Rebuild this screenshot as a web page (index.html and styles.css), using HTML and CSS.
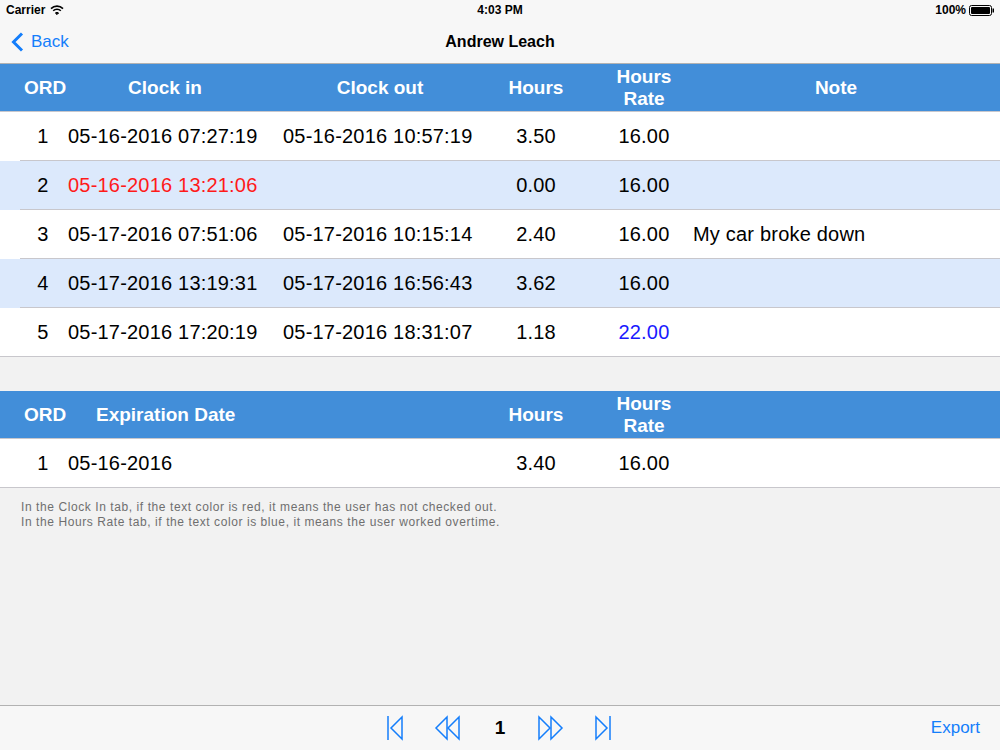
FILE: index.html
```html
<!DOCTYPE html>
<html lang="en">
<head>
  <meta charset="UTF-8" />
  <meta name="viewport" content="width=device-width, initial-scale=1.0" />
  <title>Andrew Leach</title>
  <link rel="stylesheet" href="styles.css">
</head>
<body>
  <div class="status-bar">
    <div class="status-left">
      <span>Carrier</span>
      <svg class="wifi" width="14" height="10" viewBox="0 0 14 10">
        <path d="M1 3.6 A8.5 8.5 0 0 1 13 3.6" fill="none" stroke="#000" stroke-width="1.6"/>
        <path d="M3.2 5.8 A5.4 5.4 0 0 1 10.8 5.8" fill="none" stroke="#000" stroke-width="1.6"/>
        <path d="M5.4 8 A2.4 2.4 0 0 1 8.6 8 L7 9.6 Z" fill="#000" stroke="#000" stroke-width="1"/>
      </svg>
    </div>
    <div class="status-time">4:03 PM</div>
    <div class="status-right">
      <span>100%</span>
      <svg width="26" height="11" viewBox="0 0 26 11">
        <rect x="0.5" y="0.5" width="22" height="10" rx="2" fill="none" stroke="#000"/>
        <rect x="2" y="2" width="19" height="7" rx="1" fill="#000"/>
        <rect x="23.5" y="3.5" width="1.5" height="4" fill="#000"/>
      </svg>
    </div>
  </div>

  <div class="nav-bar">
    <a class="back" href="#">
      <svg width="14" height="20" viewBox="0 0 14 20">
        <path d="M11 1.5 L2.5 10 L11 18.5" fill="none" stroke="#147efb" stroke-width="3"/>
      </svg>
      <span>Back</span>
    </a>
    <div class="nav-title">Andrew Leach</div>
  </div>

  <div class="content">
    <div class="table">
      <div class="head">
        <div class="cols">
          <div class="c">ORD</div>
          <div class="c">Clock in</div>
          <div class="c out-head">Clock out</div>
          <div class="c">Hours</div>
          <div class="c">Hours<br>Rate</div>
          <div class="c note-head">Note</div>
        </div>
      </div>
      <div class="row">
        <div class="cols line">
          <div class="c">1</div>
          <div class="c in">05-16-2016 07:27:19</div>
          <div class="c out">05-16-2016 10:57:19</div>
          <div class="c">3.50</div>
          <div class="c">16.00</div>
          <div class="c note"></div>
        </div>
      </div>
      <div class="row alt">
        <div class="cols line">
          <div class="c">2</div>
          <div class="c in red">05-16-2016 13:21:06</div>
          <div class="c out"></div>
          <div class="c">0.00</div>
          <div class="c">16.00</div>
          <div class="c note"></div>
        </div>
      </div>
      <div class="row">
        <div class="cols line">
          <div class="c">3</div>
          <div class="c in">05-17-2016 07:51:06</div>
          <div class="c out">05-17-2016 10:15:14</div>
          <div class="c">2.40</div>
          <div class="c">16.00</div>
          <div class="c note">My car broke down</div>
        </div>
      </div>
      <div class="row alt">
        <div class="cols line">
          <div class="c">4</div>
          <div class="c in">05-17-2016 13:19:31</div>
          <div class="c out">05-17-2016 16:56:43</div>
          <div class="c">3.62</div>
          <div class="c">16.00</div>
          <div class="c note"></div>
        </div>
      </div>
      <div class="row last">
        <div class="cols">
          <div class="c">5</div>
          <div class="c in">05-17-2016 17:20:19</div>
          <div class="c out">05-17-2016 18:31:07</div>
          <div class="c">1.18</div>
          <div class="c blue">22.00</div>
          <div class="c note"></div>
        </div>
      </div>
    </div>

    <div class="table second">
      <div class="head">
        <div class="cols">
          <div class="c">ORD</div>
          <div class="c in-head">Expiration Date</div>
          <div class="c"></div>
          <div class="c">Hours</div>
          <div class="c">Hours<br>Rate</div>
          <div class="c"></div>
        </div>
      </div>
      <div class="row last">
        <div class="cols">
          <div class="c">1</div>
          <div class="c in">05-16-2016</div>
          <div class="c"></div>
          <div class="c">3.40</div>
          <div class="c">16.00</div>
          <div class="c"></div>
        </div>
      </div>
    </div>

    <div class="hint">
      In the Clock In tab, if the text color is red, it means the user has not checked out.<br>
      In the Hours Rate tab, if the text color is blue, it means the user worked overtime.
    </div>
  </div>

  <div class="toolbar">
    <div class="pager">
      <svg width="18" height="26" viewBox="0 0 18 26">
        <path d="M2 1 V25" stroke="#147efb" stroke-width="1.5"/>
        <path d="M16 2 L5 13 L16 24 Z" fill="none" stroke="#147efb" stroke-width="1.5"/>
      </svg>
      <svg width="28" height="26" viewBox="0 0 28 26">
        <path d="M13 2 L2 13 L13 24 Z" fill="none" stroke="#147efb" stroke-width="1.5"/>
        <path d="M25 2 L14 13 L25 24 Z" fill="none" stroke="#147efb" stroke-width="1.5"/>
      </svg>
      <span class="page">1</span>
      <svg width="28" height="26" viewBox="0 0 28 26">
        <path d="M3 2 L14 13 L3 24 Z" fill="none" stroke="#147efb" stroke-width="1.5"/>
        <path d="M15 2 L26 13 L15 24 Z" fill="none" stroke="#147efb" stroke-width="1.5"/>
      </svg>
      <svg width="18" height="26" viewBox="0 0 18 26">
        <path d="M2 2 L13 13 L2 24 Z" fill="none" stroke="#147efb" stroke-width="1.5"/>
        <path d="M16 1 V25" stroke="#147efb" stroke-width="1.5"/>
      </svg>
    </div>
    <a class="export" href="#">Export</a>
  </div>
</body>
</html>
```

FILE: styles.css
```css
html, body {
  margin: 0;
  height: 100%;
}
body {
  width: 1000px;
  height: 750px;
  display: flex;
  flex-direction: column;
  font-family: "Liberation Sans", Arial, sans-serif;
  background-color: #f2f2f2;
  color: #000;
  overflow: hidden;
}
a {
  text-decoration: none;
}
.status-bar {
  height: 20px;
  display: flex;
  align-items: center;
  justify-content: space-between;
  padding: 0 5px 0 6px;
  background-color: #f7f7f7;
  font-size: 12px;
  font-weight: bold;
  position: relative;
}
.status-left, .status-right {
  display: flex;
  align-items: center;
  gap: 5px;
}
.status-right {
  gap: 3px;
}
.status-time {
  position: absolute;
  left: 0;
  right: 0;
  text-align: center;
  pointer-events: none;
}
.nav-bar {
  box-sizing: border-box;
  height: 44px;
  display: flex;
  align-items: center;
  background-color: #f7f7f7;
  border-bottom: 1px solid #b2b2b2;
  position: relative;
}
.back {
  display: flex;
  align-items: center;
  gap: 6px;
  padding-left: 11px;
  color: #147efb;
  font-size: 17px;
  position: relative;
  z-index: 1;
}
.nav-title {
  position: absolute;
  left: 0;
  right: 0;
  text-align: center;
  font-size: 16px;
  font-weight: bold;
}
.content {
  flex: 1;
}
.second {
  margin-top: 34px;
}
.head {
  background-color: #428ed9;
  color: #fff;
  font-weight: bold;
  font-size: 19px;
  border-bottom: 1px solid #c8c7cc;
}
.head .cols {
  height: 47px;
  margin-left: 20px;
}
.head .c {
  line-height: 22px;
}
.cols {
  display: grid;
  grid-template-columns: 38px 206px 216px 104px 112px 276px;
  align-items: center;
  padding-left: 4px;
}
.c {
  text-align: center;
}
.out-head {
  padding-left: 8px;
}
.note-head {
  padding-right: 4px;
}
.row {
  background-color: #fff;
  font-size: 20px;
  letter-spacing: 0.2px;
}
.row.alt {
  background-color: #dce9fc;
}
.row .cols {
  height: 48px;
  margin-left: 20px;
}
.row .line {
  border-bottom: 1px solid #c8c7cc;
}
.row.last {
  border-bottom: 1px solid #c8c7cc;
}
.in, .out, .note, .in-head {
  text-align: left;
}
.in {
  padding-left: 6px;
}
.in-head {
  padding-left: 34px;
  white-space: nowrap;
}
.out {
  padding-left: 15px;
}
.note {
  margin-left: -7px;
}
.red {
  color: #ff1a1a;
}
.blue {
  color: #1a1aff;
}
.hint {
  padding: 12px 0 0 21px;
  font-size: 12px;
  letter-spacing: 0.58px;
  line-height: 15px;
  color: #6f6f6f;
}
.toolbar {
  height: 44px;
  display: flex;
  align-items: center;
  justify-content: center;
  background-color: #f7f7f7;
  border-top: 1px solid #b2b2b2;
  position: relative;
}
.pager {
  display: flex;
  align-items: center;
  gap: 30px;
  margin-left: -2px;
}
.page {
  font-size: 19px;
  font-weight: bold;
  width: 12px;
  margin-left: 2px;
  text-align: center;
}
.export {
  position: absolute;
  right: 20px;
  color: #147efb;
  font-size: 17px;
}
```
